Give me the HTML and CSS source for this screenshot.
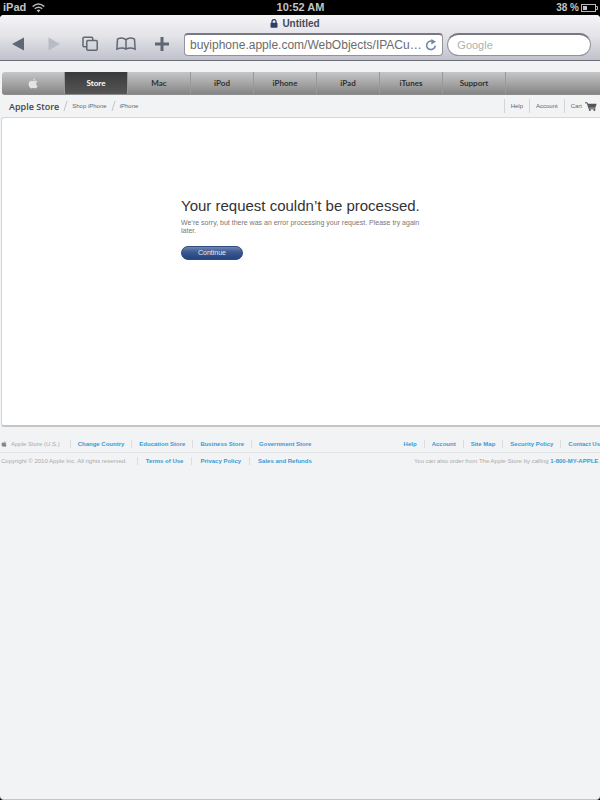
FILE: index.html
```html
<!DOCTYPE html>
<html lang="en">
<head>
    <meta charset="UTF-8">
    <meta name="viewport" content="width=device-width, initial-scale=1.0">
    <title>Untitled</title>
    <link rel="stylesheet" href="styles.css">
</head>
<body>

<!-- Status bar -->
<div class="status-bar">
    <div class="status-left">
        <span>iPad</span>
        <svg class="wifi" width="13" height="10" viewBox="0 0 13 10" fill="none" stroke="#b9b9b9" stroke-width="1.5">
            <path d="M0.7 3.6Q6.5 -1.6 12.3 3.6"/>
            <path d="M2.8 5.8Q6.5 2.6 10.2 5.8"/>
            <path d="M4.6 7.3Q6.5 5.8 8.4 7.3L6.5 9.4Z" fill="#b9b9b9" stroke="none"/>
        </svg>
    </div>
    <div class="status-time">10:52 AM</div>
    <div class="status-right">
        <span>38 %</span>
        <svg width="17" height="8" viewBox="0 0 17 8">
            <rect x="0.5" y="0.5" width="14" height="7" fill="none" stroke="#b9b9b9"/>
            <rect x="2" y="2" width="4" height="4" fill="#c4c4c4"/>
            <path d="M15 2.5h1.5v3H15" fill="none" stroke="#b9b9b9"/>
        </svg>
    </div>
</div>

<div class="browser">
    <!-- Safari toolbar -->
    <div class="toolbar">
        <div class="window-title">
            <svg width="8" height="9" viewBox="0 0 8 9">
                <path d="M2 4V2.6a2 2 0 0 1 4 0V4" fill="none" stroke="#2f4068" stroke-width="1.3"/>
                <rect x="0.5" y="3.8" width="7" height="5" rx="0.8" fill="#2f4068"/>
            </svg>
            <span>Untitled</span>
        </div>
        <div class="controls">
            <button class="tool" aria-label="Back">
                <svg width="16" height="16" viewBox="0 0 16 16"><path d="M2 8L14 1.5V14.5Z" fill="#5f6774"/></svg>
            </button>
            <button class="tool" aria-label="Forward">
                <svg width="16" height="16" viewBox="0 0 16 16"><path d="M14 8L2.5 1.5V14.5Z" fill="#b9bcc4"/></svg>
            </button>
            <button class="tool" aria-label="Pages">
                <svg width="16" height="16" viewBox="0 0 16 16" fill="none" stroke="#606874" stroke-width="1.5">
                    <path d="M4.5 10.8H2A1 1 0 0 1 1 9.8V2.3A1 1 0 0 1 2 1.3H9.7A1 1 0 0 1 10.7 2.3V4.2"/>
                    <rect x="4.8" y="4.6" width="10.4" height="9.6" rx="1"/>
                </svg>
            </button>
            <button class="tool" aria-label="Bookmarks">
                <svg width="20" height="16" viewBox="0 0 20 16" fill="none" stroke="#606874" stroke-width="1.5">
                    <path d="M10 3.6Q6 0.4 1.5 3.2L0.9 13.2Q6 10.6 10 13.2Q14 10.6 19.1 13.2L18.5 3.2Q14 0.4 10 3.6V13"/>
                </svg>
            </button>
            <button class="tool" aria-label="Add">
                <svg width="16" height="16" viewBox="0 0 16 16"><path d="M8 1V15M1 8H15" stroke="#5f6774" stroke-width="3"/></svg>
            </button>
            <div class="address">
                <input type="text" class="address-input" aria-label="Address" value="buyiphone.apple.com/WebObjects/IPACustomer.woa">
                <button class="reload" aria-label="Reload">
                    <svg width="12" height="12" viewBox="0 0 12 12">
                        <path d="M7.2 2.2A4.3 4.3 0 1 0 10.2 6.6" fill="none" stroke="#7187a8" stroke-width="1.6"/>
                        <path d="M6.3 0L11 2.8L6.3 5.4Z" fill="#7187a8"/>
                    </svg>
                </button>
            </div>
            <input type="search" class="search" aria-label="Search" placeholder="Google">
        </div>
    </div>

    <!-- Store navigation -->
    <nav class="store-nav">
        <a href="#" aria-label="Apple">
            <svg width="10" height="11" viewBox="0 0 12 13">
                <path d="M6 3.6C7 3.6 8 2.8 9.4 3.1Q10.6 3.3 11.2 4.2Q9.6 5.3 9.8 7Q9.9 8.7 11.5 9.5Q10.6 12.2 8.9 12.4C7.9 12.5 7.5 11.9 6.4 11.9C5.2 11.9 4.8 12.5 3.9 12.4C1.9 12 0.5 8.8 0.8 6.4C1.1 3.9 3 2.9 4.2 3.1C5 3.2 5.4 3.6 6 3.6Z" fill="#e4e4e4"/>
                <path d="M6.1 3Q6 0.9 8.4 0.2Q8.5 2.4 6.1 3Z" fill="#e4e4e4"/>
            </svg>
        </a>
        <a href="#" class="active">Store</a>
        <a href="#">Mac</a>
        <a href="#">iPod</a>
        <a href="#">iPhone</a>
        <a href="#">iPad</a>
        <a href="#">iTunes</a>
        <a href="#">Support</a>
    </nav>

    <div class="sub-nav">
        <div class="breadcrumb">
            <a href="#" class="store-name">Apple Store</a>
            <svg width="5" height="10" viewBox="0 0 5 10"><path d="M4 0L1 10" stroke="#c3c3c5"/></svg>
            <a href="#">Shop iPhone</a>
            <svg width="5" height="10" viewBox="0 0 5 10"><path d="M4 0L1 10" stroke="#c3c3c5"/></svg>
            <a href="#">iPhone</a>
        </div>
        <div class="account-links">
            <a href="#">Help</a>
            <a href="#">Account</a>
            <a href="#">Cart
                <svg width="12" height="9" viewBox="0 0 12 9">
                    <path d="M0 0.8H2.2L4 6.8H10.4" fill="none" stroke="#555"/>
                    <path d="M2.6 1.8H11.6L10.4 5.8H3.8Z" fill="#555"/>
                    <circle cx="4.8" cy="8" r="1" fill="#555"/>
                    <circle cx="9.4" cy="8" r="1" fill="#555"/>
                </svg>
            </a>
        </div>
    </div>

    <main class="content">
        <div class="message">
            <h1>Your request couldn’t be processed.</h1>
            <p>We’re sorry, but there was an error processing your request. Please try again later.</p>
            <button class="continue">Continue</button>
        </div>
    </main>

    <footer class="footer">
        <div class="footer-row">
            <div class="footer-group">
                <span class="region">
                    <svg width="6" height="6" viewBox="0 0 12 13">
                        <path d="M6 3.6C7 3.6 8 2.8 9.4 3.1Q10.6 3.3 11.2 4.2Q9.6 5.3 9.8 7Q9.9 8.7 11.5 9.5Q10.6 12.2 8.9 12.4C7.9 12.5 7.5 11.9 6.4 11.9C5.2 11.9 4.8 12.5 3.9 12.4C1.9 12 0.5 8.8 0.8 6.4C1.1 3.9 3 2.9 4.2 3.1C5 3.2 5.4 3.6 6 3.6ZM6.1 3Q6 0.9 8.4 0.2Q8.5 2.4 6.1 3Z" fill="#858585"/>
                    </svg>
                    Apple Store (U.S.)
                </span>
                <a href="#">Change Country</a>
                <a href="#">Education Store</a>
                <a href="#">Business Store</a>
                <a href="#">Government Store</a>
            </div>
            <div class="footer-group">
                <a href="#">Help</a>
                <a href="#">Account</a>
                <a href="#">Site Map</a>
                <a href="#">Security Policy</a>
                <a href="#">Contact Us</a>
            </div>
        </div>
        <div class="footer-row legal">
            <div class="footer-group">
                <span>Copyright © 2010 Apple Inc. All rights reserved.</span>
                <a href="#">Terms of Use</a>
                <a href="#">Privacy Policy</a>
                <a href="#">Sales and Refunds</a>
            </div>
            <div class="order">You can also order from The Apple Store by calling <a href="#">1-800-MY-APPLE</a>.</div>
        </div>
    </footer>
</div>

</body>
</html>
```
FILE: styles.css
```css
* {
    box-sizing: border-box;
}
body {
    margin: 0;
    min-height: 100vh;
    display: flex;
    flex-direction: column;
    background-color: #000;
    font-family: "Liberation Sans", Arial, sans-serif;
}
a {
    color: inherit;
    text-decoration: none;
}
button {
    border: none;
    padding: 0;
    background: none;
    font-family: inherit;
    cursor: pointer;
}
svg {
    display: block;
    flex: none;
}

/* Status bar */
.status-bar {
    display: flex;
    align-items: center;
    height: 15px;
    padding: 0 2px 0 3px;
    color: #c4c4c4;
    font-size: 11px;
    font-weight: bold;
    line-height: 15px;
}
.status-left,
.status-right {
    display: flex;
    flex: 1;
    align-items: center;
    gap: 6px;
}
.status-right {
    justify-content: flex-end;
    gap: 2px;
    font-size: 10px;
}

.browser {
    flex: 1;
    background-color: #f2f3f5;
    border-bottom: 1px solid #c4c4c6;
    border-radius: 4px;
    overflow: hidden;
}

/* Toolbar */
.toolbar {
    height: 46px;
    background: linear-gradient(#f5f5f7, #e4e4e9 45%, #c1c1cd);
    border-bottom: 1px solid #6d6e78;
}
.window-title {
    display: flex;
    justify-content: center;
    align-items: center;
    gap: 4px;
    height: 17px;
    padding-right: 10px;
    color: #454b5e;
    font-size: 10px;
    font-weight: bold;
}
.controls {
    display: flex;
    align-items: center;
    height: 24px;
    padding-right: 9px;
}
.tool {
    display: flex;
    flex: none;
    align-items: center;
    justify-content: center;
    width: 36px;
    height: 24px;
}
.address {
    display: flex;
    align-items: center;
    flex: 2 0 0;
    min-width: 0;
    height: 23px;
    margin: 0 4px;
    padding: 0 5px;
    background-color: #fff;
    border: 1px solid #92939c;
    border-top: 2px solid #777883;
    border-radius: 4px;
}
.address-input {
    flex: 1;
    min-width: 0;
    border: none;
    padding: 0;
    background: none;
    color: #6c6c6c;
    font-family: inherit;
    font-size: 12px;
    text-overflow: ellipsis;
    outline: none;
}
.search {
    flex: 1 0 0;
    min-width: 0;
    height: 23px;
    padding: 0 9px;
    appearance: none;
    background-color: #fff;
    border: 1px solid #92939c;
    border-top: 2px solid #777883;
    border-radius: 12px;
    font-family: inherit;
    font-size: 11px;
    outline: none;
}
.search::placeholder {
    color: #b0b0b0;
}

/* Store navigation */
.store-nav {
    display: flex;
    height: 23px;
    margin: 11px 0 0 2px;
    background: linear-gradient(#c6c6c6, #a6a6a6 50%, #858585);
    border-bottom: 1px solid #8c8c8c;
    border-radius: 3px 0 0 3px;
    color: #303030;
    font-family: Lato, sans-serif;
    font-size: 8px;
    font-weight: bold;
}
.store-nav a {
    display: flex;
    align-items: center;
    justify-content: center;
    width: 63px;
    border-right: 1px solid #99999a;
}
.store-nav .active {
    background: linear-gradient(#3a3a3a, #555);
    color: #fff;
}
.sub-nav {
    display: flex;
    justify-content: space-between;
    align-items: center;
    height: 22px;
    padding: 0 3px 0 9px;
    color: #666;
    font-size: 6px;
}
.breadcrumb {
    display: flex;
    align-items: center;
    gap: 4px;
}
.store-name {
    color: #444;
    font-family: "Open Sans", sans-serif;
    font-size: 9px;
    font-weight: 600;
}
.account-links {
    display: flex;
}
.account-links a {
    display: flex;
    align-items: center;
    gap: 3px;
    height: 14px;
    padding: 0 6px;
    border-left: 1px solid #d4d4d6;
}
.account-links a:last-child {
    padding-right: 0;
}

/* Error message */
.content {
    min-height: 310px;
    margin-left: 1px;
    padding: 79px 0;
    background-color: #fff;
    border: 1px solid #d6d6d8;
    border-right: none;
    border-bottom: 2px solid #c3c4c6;
    border-radius: 3px 0 0 3px;
}
.message {
    max-width: 240px;
    margin: 0 auto;
}
.message h1 {
    margin: 0;
    color: #333;
    font-size: 15px;
    font-weight: normal;
    line-height: 18px;
    white-space: nowrap;
}
.message p {
    margin: 4px 0 11px;
    color: #777;
    font-size: 7px;
    line-height: 8px;
}
.continue {
    display: block;
    width: 62px;
    height: 14px;
    background: linear-gradient(#7186ae, #3d5a91 40%, #24447e);
    border: 1px solid #2f4a7f;
    border-radius: 7px;
    color: #e6ebf5;
    font-size: 7px;
    line-height: 12px;
}

/* Footer */
.footer {
    padding-top: 9px;
    color: #aaa;
    font-size: 6px;
}
.footer a {
    color: #3a9ad6;
    font-weight: bold;
}
.footer-row {
    display: flex;
    justify-content: space-between;
    align-items: center;
    height: 16px;
    padding: 0 0 0 1px;
    white-space: nowrap;
}
.legal {
    border-top: 1px solid #e4e5e7;
}
.footer-group {
    display: flex;
}
.footer-group > * {
    height: 8px;
    padding: 0 7px;
    border-left: 1px solid #dcdde0;
    line-height: 8px;
}
.legal .footer-group > * {
    padding: 0 8px;
}
.footer-group > :first-child,
.legal .footer-group > :first-child {
    padding-left: 0;
    border-left: none;
}
.footer-group > :last-child {
    padding-right: 0;
}
.footer-group > span,
.legal .footer-group > span {
    padding-right: 10px;
}
.region {
    display: flex;
    align-items: center;
    gap: 4px;
}
```
